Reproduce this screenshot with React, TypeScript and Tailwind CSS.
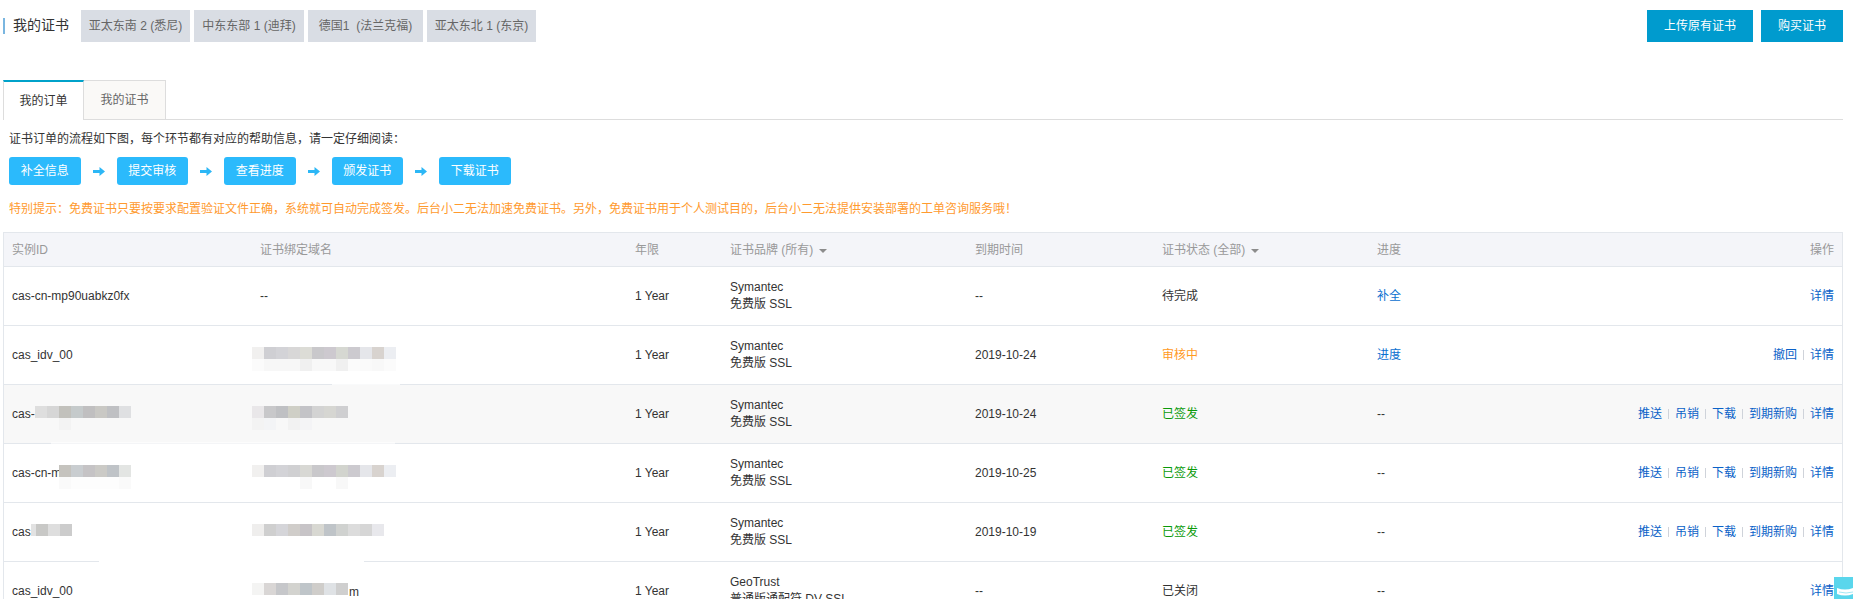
import { Fragment } from "react";

const stack = "font-['Liberation_Sans','Noto_Sans_CJK_SC',sans-serif]";

const regions = [
  { name: "亚太东南 2 (悉尼)", width: "w-[109px]" },
  { name: "中东东部 1 (迪拜)", width: "w-[110px]" },
  { name: "德国1\u00a0\u00a0(法兰克福)", width: "w-[115px]" },
  { name: "亚太东北 1 (东京)", width: "w-[109px]" },
];

const steps = ["补全信息", "提交审核", "查看进度", "颁发证书", "下载证书"];

type MosaicData = { top: string[]; bottom?: string[]; offset?: string; lead?: boolean };

type Row = {
  id: string;
  idMosaic?: MosaicData;
  domain: string;
  domainMosaic?: MosaicData;
  domainTail?: string;
  brand: string;
  product: string;
  expires: string;
  status: string;
  statusColor: string;
  progress: string;
  progressLink?: boolean;
  actions: string[];
  hover?: boolean;
};

const issued = ["推送", "吊销", "下载", "到期新购", "详情"];

const rows: Row[] = [
  {
    id: "cas-cn-mp90uabkz0fx",
    domain: "--",
    brand: "Symantec",
    product: "免费版 SSL",
    expires: "--",
    status: "待完成",
    statusColor: "text-[#333333]",
    progress: "补全",
    progressLink: true,
    actions: ["详情"],
  },
  {
    id: "cas_idv_00",
    domain: "",
    domainMosaic: {
      offset: "-ml-[8px]",
      top: ["#f1f0ef", "#cfcfd3", "#d3d3d7", "#d8d7d7", "#dcdcd6", "#c9c8cb", "#cdc9cf", "#d6d8d2", "#cccacf", "#e5e6ea", "#d8d3cf", "#eceef2"],
      bottom: ["#fbfbfb", "#f7f7f7", "#f7f7f7", "#f7f7f7", "#f0f0f0", "#f8f8f8", "#f8f8f8", "#f0f0f0", "#fbfbfb", "#fafafa", "#f8f8f8", "#fbfbfb"],
    },
    brand: "Symantec",
    product: "免费版 SSL",
    expires: "2019-10-24",
    status: "审核中",
    statusColor: "text-[#ff9a1f]",
    progress: "进度",
    progressLink: true,
    actions: ["撤回", "详情"],
  },
  {
    id: "cas-",
    idMosaic: {
      top: ["#dedede", "#d6d6d6", "#c2c1bc", "#c5cacb", "#c0bfc0", "#c9c8c4", "#bfc0c3", "#dfe0e2"],
      bottom: ["#f8f8f8", "#f8f8f8", "#f3f3f3"],
    },
    domain: "",
    domainMosaic: {
      offset: "-ml-[8px]",
      top: ["#e9e7e9", "#c8c8ca", "#bfc0c3", "#cfcfc6", "#c3c3c7", "#d3d3d3", "#d6d6d2", "#cfcfd1"],
      bottom: ["#f3f3f3", "#f3f4f6", "#f8f8f8", "#f2f2f2", "#f4f4f6"],
    },
    brand: "Symantec",
    product: "免费版 SSL",
    expires: "2019-10-24",
    status: "已签发",
    statusColor: "text-[#0a9a0a]",
    progress: "--",
    actions: issued,
    hover: true,
  },
  {
    id: "cas-cn-m",
    idMosaic: {
      offset: "-ml-[2px]",
      top: ["#c5c3be", "#c9cdd0", "#c5c3c5", "#cbcac6", "#bfc3c7", "#e3e5e3"],
      bottom: ["#fafafa", "#fdfdfd", "#fdfdfd", "#fdfdfd", "#fdfdfd", "#fafafa"],
    },
    domain: "",
    domainMosaic: {
      offset: "-ml-[8px]",
      top: ["#f1f0ef", "#cfcfd3", "#d3d3d7", "#d0d0d2", "#d8d8d4", "#c9c8cb", "#cdc9cf", "#d2d4ce", "#cccacf", "#e5e6ea", "#d8d3cf", "#eceef2"],
      bottom: ["#ffffff", "#ffffff", "#ffffff", "#ffffff", "#f8f8f8", "#ffffff", "#ffffff", "#f8f8f8"],
    },
    brand: "Symantec",
    product: "免费版 SSL",
    expires: "2019-10-25",
    status: "已签发",
    statusColor: "text-[#0a9a0a]",
    progress: "--",
    actions: issued,
  },
  {
    id: "cas",
    idMosaic: { lead: true, top: ["#c8c8c6", "#dedede", "#cccccc"] },
    domain: "",
    domainMosaic: {
      offset: "-ml-[8px]",
      top: ["#efeeed", "#cfcfcf", "#d5d5d9", "#d0cdca", "#c7c4c7", "#d8d8d2", "#bfc4c8", "#d0d2d0", "#dcdcdc", "#d6d6d6", "#e8e8ec"],
    },
    brand: "Symantec",
    product: "免费版 SSL",
    expires: "2019-10-19",
    status: "已签发",
    statusColor: "text-[#0a9a0a]",
    progress: "--",
    actions: issued,
  },
  {
    id: "cas_idv_00",
    domain: "",
    domainMosaic: {
      offset: "-ml-[8px]",
      top: ["#f4f4f3", "#d9d6d5", "#c6c7ca", "#d3d3cf", "#bfc5c9", "#cfcdca", "#dfe2e5", "#cfcfcf"],
    },
    domainTail: "m",
    brand: "GeoTrust",
    product: "普通版通配符 DV SSL",
    expires: "--",
    status: "已关闭",
    statusColor: "text-[#333333]",
    progress: "--",
    actions: ["详情"],
  },
];

function Mosaic({ data }: { data: MosaicData }) {
  return (
    <span className={`flex h-[24px] flex-col mt-[7px] shrink-0 ${data.offset ?? ""}`}>
      <span className="flex h-[12px]">
        {data.lead && <span className="block h-[12px] w-[5px] bg-[#e2e2e2]" />}
        {data.top.map((color, i) => (
          <span key={i} className="block h-[12px] w-[12px]" style={{ backgroundColor: color }} />
        ))}
      </span>
      <span className="flex h-[12px]">
        {(data.bottom ?? []).map((color, i) => (
          <span key={i} className="block h-[12px] w-[12px]" style={{ backgroundColor: color }} />
        ))}
      </span>
    </span>
  );
}

function Arrow() {
  return (
    <svg width="12" height="9" viewBox="0 0 12 9" className="shrink-0">
      <path d="M0 3h6.5V0L12 4.5 6.5 9V6H0z" fill="#2cb7f6" />
    </svg>
  );
}

function Caret() {
  return <span className="ml-[6px] inline-block h-0 w-0 translate-y-[-1px] border-x-[4px] border-t-[4px] border-x-transparent border-t-[#8c8c8c]" />;
}

export default function App() {
  return (
    <div className={`h-[599px] overflow-hidden bg-white pl-[3px] pr-[10px] text-[12px] text-[#333333] ${stack}`}>
      <div className="flex h-[42px] items-start justify-between pt-[10px]">
        <div className="flex items-start">
          <div className="mt-[8px] h-[16px] w-[2px] bg-[#7ab6e0]"></div>
          <div className="ml-[8px] mr-[12px] mt-[5px] text-[14px] leading-[20px] text-[#333333]">我的证书</div>
          <div className="flex gap-[4px]">
            {regions.map((region) => (
              <div key={region.name} className={`flex h-[32px] items-center justify-center bg-[#d9dde4] text-[#666666] ${region.width}`}>
                {region.name}
              </div>
            ))}
          </div>
        </div>
        <div className="flex gap-[8px]">
          <button className="h-[32px] w-[106px] bg-[#009bce] text-white">上传原有证书</button>
          <button className="h-[32px] w-[82px] bg-[#009bce] text-white">购买证书</button>
        </div>
      </div>

      <div className="mt-[38px] flex h-[40px] border-b border-[#dddddd]">
        <div className="flex h-[40px] w-[81px] items-center justify-center border-x border-t-2 border-x-[#dddddd] border-t-[#00a2ca] bg-white text-[#333333]">我的订单</div>
        <div className="flex h-[39px] w-[82px] items-center justify-center border-r border-t border-[#dddddd] bg-[#faf9f7] text-[#666666]">我的证书</div>
      </div>

      <div className="flex h-[37px] items-center pl-[6px]">证书订单的流程如下图，每个环节都有对应的帮助信息，请一定仔细阅读：</div>

      <div className="flex items-center gap-[12px] pl-[6px]">
        {steps.map((step, i) => (
          <Fragment key={step}>
            {i > 0 && <Arrow />}
            <div className="flex h-[28px] w-[71.5px] items-center justify-center rounded-[3px] bg-[#2bbafc] text-white">{step}</div>
          </Fragment>
        ))}
      </div>

      <div className="flex h-[47px] items-center pl-[6px] text-[#ff9a2e]">
        特别提示：免费证书只要按要求配置验证文件正确，系统就可自动完成签发。后台小二无法加速免费证书。另外，免费证书用于个人测试目的，后台小二无法提供安装部署的工单咨询服务哦！
      </div>

      <div className="relative">
        <table className="w-full table-fixed border-separate border-spacing-0 border border-[#e3e7ec]">
          <colgroup>
            <col className="w-[248px]" />
            <col className="w-[375px]" />
            <col className="w-[95px]" />
            <col className="w-[245px]" />
            <col className="w-[187px]" />
            <col className="w-[215px]" />
            <col className="w-[200px]" />
            <col />
          </colgroup>
          <thead>
            <tr className="bg-[#f4f5f9] text-[#999999]">
              <th className="h-[34px] border-b border-[#e3e7ec] px-[8px] text-left font-normal">实例ID</th>
              <th className="h-[34px] border-b border-[#e3e7ec] px-[8px] text-left font-normal">证书绑定域名</th>
              <th className="h-[34px] border-b border-[#e3e7ec] px-[8px] text-left font-normal">年限</th>
              <th className="h-[34px] border-b border-[#e3e7ec] px-[8px] text-left font-normal">证书品牌 (所有)<Caret /></th>
              <th className="h-[34px] border-b border-[#e3e7ec] px-[8px] text-left font-normal">到期时间</th>
              <th className="h-[34px] border-b border-[#e3e7ec] px-[8px] text-left font-normal">证书状态 (全部)<Caret /></th>
              <th className="h-[34px] border-b border-[#e3e7ec] px-[8px] text-left font-normal">进度</th>
              <th className="h-[34px] border-b border-[#e3e7ec] px-[8px] text-right font-normal">操作</th>
            </tr>
          </thead>
          <tbody>
            {rows.map((row, i) => (
              <tr key={i} className={row.hover ? "bg-[#f8f8f8]" : "bg-white"}>
                <td className="h-[59px] border-b border-[#e3e7ec] px-[8px]">
                  <div className="flex items-center">
                    <span>{row.id}</span>
                    {row.idMosaic && <Mosaic data={row.idMosaic} />}
                  </div>
                </td>
                <td className="h-[59px] border-b border-[#e3e7ec] px-[8px]">
                  <div className="flex items-center">
                    {row.domain && <span>{row.domain}</span>}
                    {row.domainMosaic && <Mosaic data={row.domainMosaic} />}
                    {row.domainTail && <span className="ml-[1px] mt-[2px]">{row.domainTail}</span>}
                  </div>
                </td>
                <td className="h-[59px] border-b border-[#e3e7ec] px-[8px]">1 Year</td>
                <td className="h-[59px] border-b border-[#e3e7ec] px-[8px] leading-[17px]">
                  <div>{row.brand}</div>
                  <div>{row.product}</div>
                </td>
                <td className="h-[59px] border-b border-[#e3e7ec] px-[8px]">{row.expires}</td>
                <td className={`h-[59px] border-b border-[#e3e7ec] px-[8px] ${row.statusColor}`}>{row.status}</td>
                <td className={`h-[59px] border-b border-[#e3e7ec] px-[8px] ${row.progressLink ? "text-[#0a70d0]" : ""}`}>{row.progress}</td>
                <td className="h-[59px] border-b border-[#e3e7ec] px-[8px] text-right text-[#0a62c8]">
                  {row.actions.map((action, j) => (
                    <Fragment key={action}>
                      {j > 0 && <span className="mx-[6px] inline-block h-[10px] w-px bg-[#cfd3da] align-[-1px]"></span>}
                      <a>{action}</a>
                    </Fragment>
                  ))}
                </td>
              </tr>
            ))}
          </tbody>
        </table>
        {/* smudges the redaction left on the row lines */}
        <div className="absolute left-[329px] top-[151px] h-[2px] w-[68px] bg-white/80"></div>
        <div className="absolute left-[48px] top-[210px] h-[2px] w-[344px] bg-white/60"></div>
        <div className="absolute left-[96px] top-[328px] h-[2px] w-[265px] bg-white"></div>
      </div>

      {/* floating helper widget */}
      <div className="fixed bottom-0 right-0 h-[22px] w-[19px] overflow-hidden bg-[#5ad6ec]">
        <svg width="19" height="22" viewBox="0 0 19 22">
          <path d="M3 11q8 3 16 0v6q-8 3-16 0z" fill="#ffffff" />
          <path d="M5 15q7 2 14 0" stroke="#a6e8f4" fill="none" />
        </svg>
      </div>
    </div>
  );
}
